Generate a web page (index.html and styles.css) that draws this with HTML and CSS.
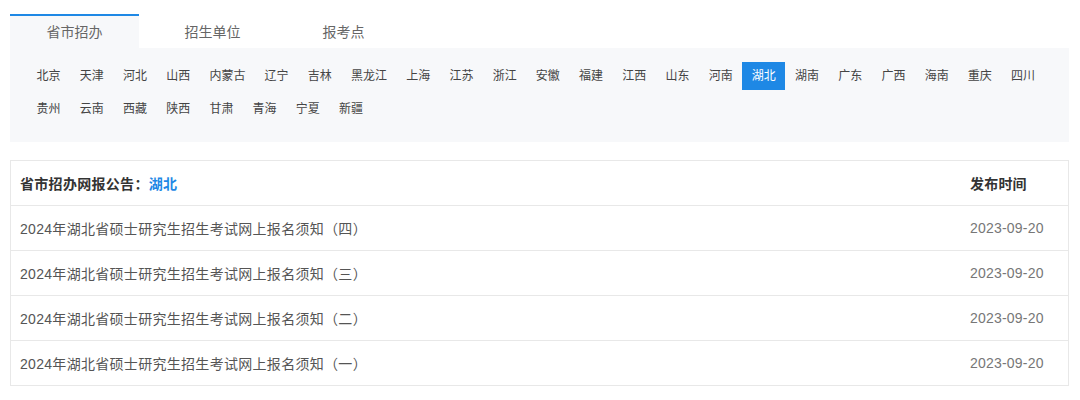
FILE: index.html
```html
<!DOCTYPE html>
<html lang="zh-CN">

<head>
    <meta charset="UTF-8" />
    <meta name="viewport" content="width=device-width, initial-scale=1" />
    <title>省市招办</title>
    <link rel="stylesheet" href="styles.css">
</head>

<body>
    <div class="wrap">
        <div class="tabs">
            <div class="tab active">省市招办</div>
            <div class="tab">招生单位</div>
            <div class="tab">报考点</div>
        </div>

        <div class="panel">
            <ul class="provinces">
                <li>北京</li>
                <li>天津</li>
                <li>河北</li>
                <li>山西</li>
                <li>内蒙古</li>
                <li>辽宁</li>
                <li>吉林</li>
                <li>黑龙江</li>
                <li>上海</li>
                <li>江苏</li>
                <li>浙江</li>
                <li>安徽</li>
                <li>福建</li>
                <li>江西</li>
                <li>山东</li>
                <li>河南</li>
                <li class="current">湖北</li>
                <li>湖南</li>
                <li>广东</li>
                <li>广西</li>
                <li>海南</li>
                <li>重庆</li>
                <li>四川</li>
                <li>贵州</li>
                <li>云南</li>
                <li>西藏</li>
                <li>陕西</li>
                <li>甘肃</li>
                <li>青海</li>
                <li>宁夏</li>
                <li>新疆</li>
            </ul>
        </div>

        <div class="notices">
            <div class="row head">
                <div class="title">省市招办网报公告：<span class="place">湖北</span></div>
                <div class="date">发布时间</div>
            </div>
            <div class="row">
                <div class="title">2024年湖北省硕士研究生招生考试网上报名须知（四）</div>
                <div class="date">2023-09-20</div>
            </div>
            <div class="row">
                <div class="title">2024年湖北省硕士研究生招生考试网上报名须知（三）</div>
                <div class="date">2023-09-20</div>
            </div>
            <div class="row">
                <div class="title">2024年湖北省硕士研究生招生考试网上报名须知（二）</div>
                <div class="date">2023-09-20</div>
            </div>
            <div class="row">
                <div class="title">2024年湖北省硕士研究生招生考试网上报名须知（一）</div>
                <div class="date">2023-09-20</div>
            </div>
        </div>
    </div>
</body>

</html>
```

FILE: styles.css
```css
body {
    margin: 0;
    font-family: "Liberation Sans", "Noto Sans CJK SC", sans-serif;
    background-color: #fff;
    color: #333;
}

.wrap {
    width: 1059px;
    margin-left: 10px;
    padding-top: 14px;
}

/* tabs */
.tabs {
    display: flex;
    gap: 9px;
}

.tab {
    height: 32px;
    line-height: 32px;
    padding: 0 36.5px;
    border-top: 2px solid transparent;
    font-size: 14px;
    color: #666;
}

.tab.active {
    border-top-color: #1e88e5;
    background-color: #f7f8fa;
}

/* province list */
.panel {
    background-color: #f7f8fa;
    height: 94px;
    box-sizing: border-box;
    padding: 14px 0 0 17px;
}

.provinces {
    list-style: none;
    margin: 0;
    padding: 0;
    display: flex;
    flex-wrap: wrap;
    row-gap: 5px;
}

.provinces li {
    height: 28px;
    line-height: 28px;
    padding: 0 9.6px;
    font-size: 12px;
    color: #444;
}

.provinces li.current {
    background-color: #1e88e5;
    color: #fff;
}

/* notices table */
.notices {
    margin-top: 18px;
    border: 1px solid #e8e8e8;
    border-bottom: none;
}

.row {
    display: flex;
    align-items: center;
    height: 44px;
    border-bottom: 1px solid #e8e8e8;
    font-size: 14px;
    color: #555;
}

.row .title {
    flex: 1;
    padding-left: 9px;
    letter-spacing: 0.3px;
}

.row .date {
    width: 98px;
    color: #777;
    letter-spacing: 0.2px;
}

.row.head {
    font-weight: bold;
    color: #333;
}

.row.head .date {
    color: #333;
}

.place {
    color: #1e88e5;
}
```
